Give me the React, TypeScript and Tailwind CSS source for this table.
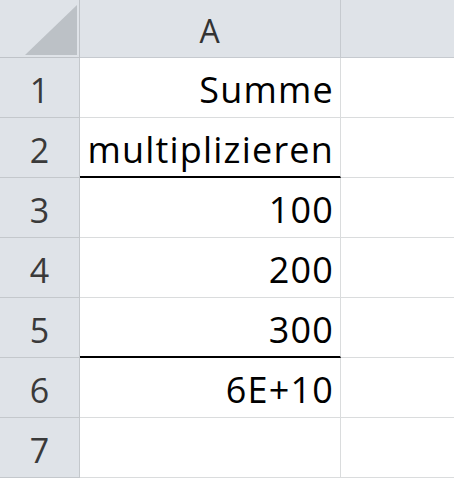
const rows: { n: number; value: string; rule?: boolean }[] = [
  { n: 1, value: 'Summe' },
  { n: 2, value: 'multiplizieren', rule: true },
  { n: 3, value: '100' },
  { n: 4, value: '200' },
  { n: 5, value: '300', rule: true },
  { n: 6, value: '6E+10' },
  { n: 7, value: '' },
];

const font = { fontFamily: '"Open Sans", "Noto Sans", sans-serif' };

const App = () => {
  return (
    <div
      className="w-[454px] h-[480px] overflow-hidden bg-white grid grid-cols-[80px_261px_1fr] grid-rows-[58px_repeat(7,60px)]"
      style={font}
    >
      {/* corner */}
      <div className="bg-[#dfe3e8] border-r border-b border-[#bfc3c8] relative">
        <svg className="absolute left-[25px] top-[5px]" width="52" height="50" viewBox="0 0 52 50">
          <polygon points="52,0 52,50 0,50" fill="#bcc1c6" />
        </svg>
      </div>
      <div className="bg-[#dfe3e8] border-r border-b border-[#c6cacf] flex items-center justify-center pt-[4px] text-[32px] tracking-[1px] text-[#333]">
        A
      </div>
      <div className="bg-[#dfe3e8] border-b border-[#c6cacf]" />

      {rows.map((row) => (
        <div key={row.n} className="contents">
          <div className="bg-[#dfe3e8] border-r border-b border-[#c4c8cc] flex items-center justify-center pt-[6px] text-[34px] text-[#3a3a3a]">
            {row.n}
          </div>
          <div
            className={`border-r border-[#dadcdd] flex items-center justify-end pr-[6px] pt-[5px] text-[36px] tracking-[1.2px] text-black whitespace-nowrap ${
              row.rule ? 'border-b-2 border-b-black' : 'border-b border-b-[#dadcdd]'
            }`}
          >
            {row.value}
          </div>
          <div className="border-b border-[#dadcdd]" />
        </div>
      ))}
    </div>
  );
};

export default App;
